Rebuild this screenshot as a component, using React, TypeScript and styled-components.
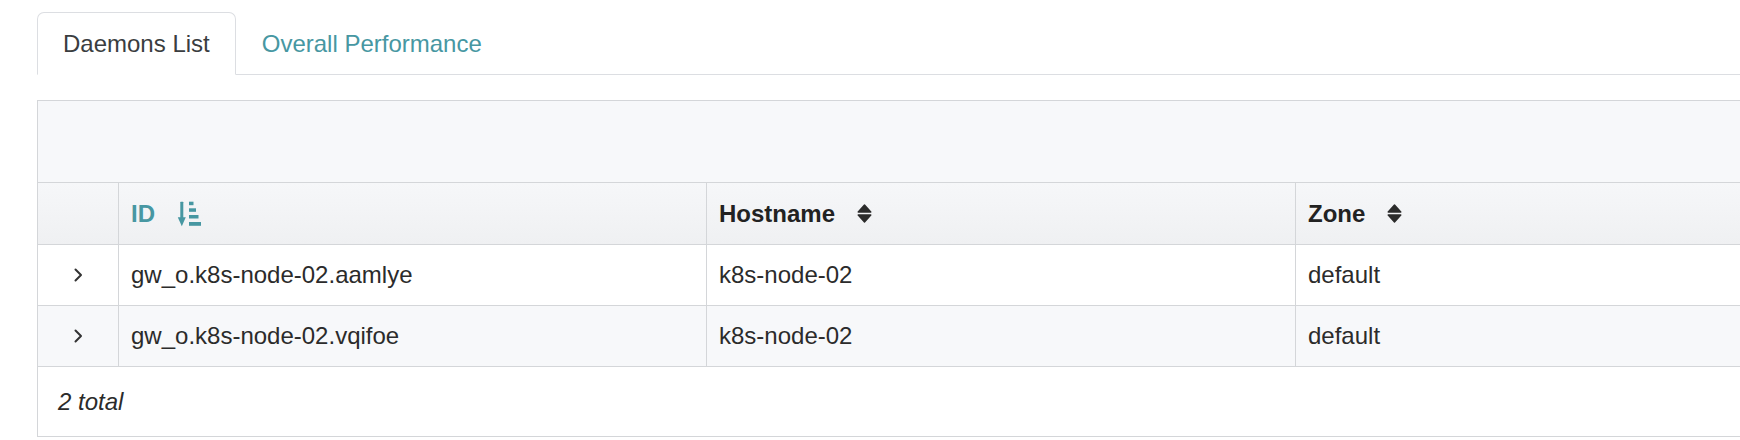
import React from "react";
import styled, { createGlobalStyle } from "styled-components";

const GlobalStyle = createGlobalStyle`
  html, body {
    margin: 0;
    padding: 0;
    background: #ffffff;
    overflow: hidden;
  }
  body {
    font-family: "Liberation Sans", Arial, Helvetica, sans-serif;
    font-size: 24px;
    color: #333333;
  }
`;

const TEAL = "#4797a2";
const BORDER = "#d4d6d9";

const Page = styled.div`
  box-sizing: border-box;
  width: 100%;
  padding: 12px 0 0 37px;
  overflow: hidden;
`;

const Nav = styled.div`
  display: flex;
  border-bottom: 1px solid #dcdee2;
`;

const Tab = styled.div<{ $active?: boolean }>`
  margin-bottom: -1px;
  padding: 12px 25px;
  line-height: 37px;
  font-size: 24px;
  border: 1px solid ${(p) => (p.$active ? "#dcdee2" : "transparent")};
  border-bottom-color: ${(p) => (p.$active ? "#ffffff" : "transparent")};
  border-radius: 7px 7px 0 0;
  background: ${(p) => (p.$active ? "#ffffff" : "transparent")};
  color: ${(p) => (p.$active ? "#3a3d40" : TEAL)};
`;

const TableBox = styled.div`
  margin-top: 25px;
  border: 1px solid ${BORDER};
  border-right: none;
`;

const Toolbar = styled.div`
  height: 81px;
  background: #f7f8fa;
  border-bottom: 1px solid ${BORDER};
`;

const Row = styled.div<{ $header?: boolean; $striped?: boolean }>`
  display: grid;
  grid-template-columns: 80px 588px 589px 1fr;
  height: ${(p) => (p.$header ? "61px" : "60px")};
  border-bottom: 1px solid ${BORDER};
  background: ${(p) =>
    p.$header
      ? "linear-gradient(to bottom, #f6f7f9 0%, #eff0f2 100%)"
      : p.$striped
      ? "#f7f8fa"
      : "#ffffff"};
`;

const Cell = styled.div<{ $first?: boolean; $center?: boolean }>`
  box-sizing: border-box;
  display: flex;
  align-items: center;
  justify-content: ${(p) => (p.$center ? "center" : "flex-start")};
  padding: 0 ${(p) => (p.$first ? "0" : "12px")};
  border-left: ${(p) => (p.$first ? "none" : `1px solid ${BORDER}`)};
  font-size: 24px;
  color: #2b2b2b;
  white-space: nowrap;
  overflow: hidden;
`;

const HeadLabel = styled.span<{ $sorted?: boolean }>`
  font-weight: bold;
  color: ${(p) => (p.$sorted ? TEAL : "#222222")};
`;

const SortIconWrap = styled.span`
  display: inline-flex;
  margin-left: 22px;
  align-items: center;
`;

const Footer = styled.div`
  height: 69px;
  display: flex;
  align-items: center;
  padding-left: 20px;
  font-style: italic;
  font-size: 24px;
  color: #2b2b2b;
`;

const Chevron = () => (
  <svg width="10" height="14" viewBox="0 0 10 14">
    <polyline
      points="2.5,1.5 8,7 2.5,12.5"
      fill="none"
      stroke="#333"
      strokeWidth="2"
      strokeLinecap="round"
      strokeLinejoin="round"
    />
  </svg>
);

const SortAsc = () => (
  <svg width="24" height="26" viewBox="0 0 24 26">
    <g fill={TEAL}>
      <rect x="3.3" y="0.7" width="3" height="17" rx="0.5" />
      <path d="M0.8 16.2 L8.8 16.2 L4.8 25.2 Z" />
      <rect x="12" y="0.7" width="4.5" height="3.5" />
      <rect x="12" y="7.3" width="7" height="3.5" />
      <rect x="12" y="14" width="9.5" height="3.5" />
      <rect x="12" y="21" width="12" height="3.8" />
    </g>
  </svg>
);

const SortBoth = () => (
  <svg width="15" height="19" viewBox="0 0 15 19">
    <g fill="#2b2b2b" stroke="#2b2b2b" strokeWidth="1.4" strokeLinejoin="round">
      <path d="M1.2 8 L7.5 1 L13.8 8 Z" />
      <path d="M1.2 11 L7.5 18 L13.8 11 Z" />
    </g>
  </svg>
);

const rows = [
  { id: "gw_o.k8s-node-02.aamlye", host: "k8s-node-02", zone: "default" },
  { id: "gw_o.k8s-node-02.vqifoe", host: "k8s-node-02", zone: "default" },
];

export default function App() {
  return (
    <>
      <GlobalStyle />
      <Page>
        <Nav>
          <Tab $active>Daemons List</Tab>
          <Tab>Overall Performance</Tab>
        </Nav>
        <TableBox>
          <Toolbar />
          <Row $header>
            <Cell $first />
            <Cell>
              <HeadLabel $sorted>ID</HeadLabel>
              <SortIconWrap>
                <SortAsc />
              </SortIconWrap>
            </Cell>
            <Cell>
              <HeadLabel>Hostname</HeadLabel>
              <SortIconWrap>
                <SortBoth />
              </SortIconWrap>
            </Cell>
            <Cell>
              <HeadLabel>Zone</HeadLabel>
              <SortIconWrap>
                <SortBoth />
              </SortIconWrap>
            </Cell>
          </Row>
          {rows.map((r, i) => (
            <Row key={r.id} $striped={i % 2 === 1}>
              <Cell $first $center>
                <Chevron />
              </Cell>
              <Cell>{r.id}</Cell>
              <Cell>{r.host}</Cell>
              <Cell>{r.zone}</Cell>
            </Row>
          ))}
          <Footer>2 total</Footer>
        </TableBox>
      </Page>
    </>
  );
}
